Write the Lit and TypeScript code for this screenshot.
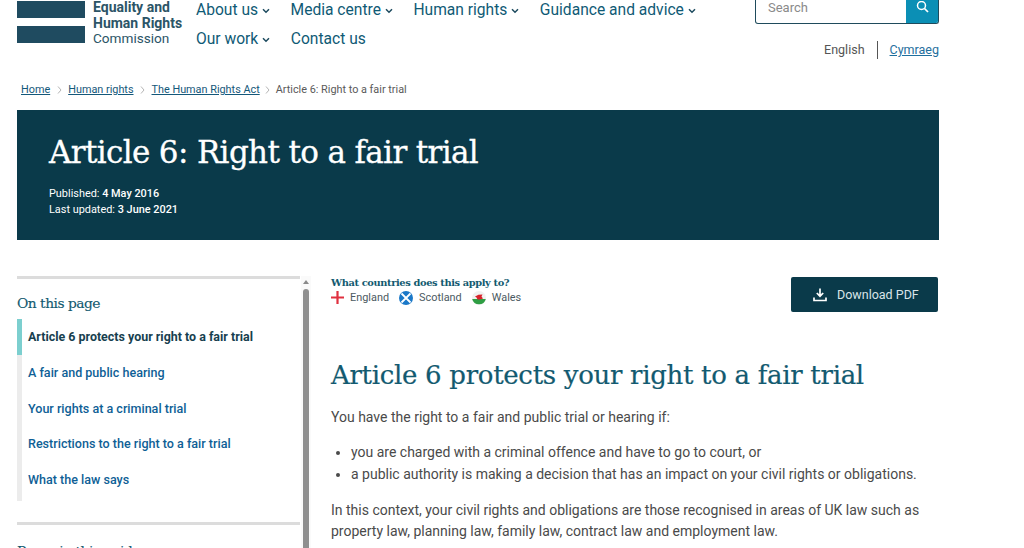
import { LitElement, html, css } from "lit";
import { customElement } from "lit/decorators.js";

const chev = html`<svg class="chev" viewBox="0 0 8 6" width="8" height="6"><path d="M1 1.2 4 4.2 7 1.2" fill="none" stroke="currentColor" stroke-width="1.5"/></svg>`;

@customElement("app-root")
export class AppRoot extends LitElement {
  static styles = css`
    :host { display: block; width: 1024px; height: 548px; overflow: hidden; background: #fff; font-family: Roboto, "Liberation Sans", sans-serif; color: #4a4a4a; }
    a { color: inherit; }
    .page { width: 922px; margin-left: 17px; }
    .header { height: 76px; display: flex; position: relative; }
    .logo { width: 68px; display: flex; flex-direction: column; gap: 8px; padding-top: 1px; flex: none; }
    .logo i { display: block; height: 17px; background: #1f4b60; }
    .logotext { margin-left: 8px; width: 103px; font-size: 13.6px; line-height: 15.5px; color: #2c5567; flex: none; }
    .logotext b { font-size: 14px; font-weight: 700; display: block; }
    .nav { width: 520px; display: flex; flex-wrap: wrap; column-gap: 20.5px; font-size: 15.6px; color: #0f5a75; align-content: flex-start; }
    .nav span { height: 29px; line-height: 21px; white-space: nowrap; display: flex; align-items: flex-start; gap: 4px; }
    .chev { margin-top: 8px; color: #1c4a5e; }
    .right { margin-left: auto; width: 184px; display: flex; flex-direction: column; align-items: flex-end; }
    .search { width: 184px; height: 24px; box-sizing: border-box; border: 1px solid #1f4b5c; border-top: 0; border-radius: 0 0 3px 3px; display: flex; overflow: hidden; }
    .search .ph { flex: 1; padding-left: 12px; font-size: 13px; line-height: 16px; color: #8a8a8a; }
    .search .btn { width: 32px; background: #0b8fb5; display: flex; justify-content: center; padding-top: 1px; box-sizing: border-box; }
    .lang { display: flex; align-items: center; margin-top: 16.5px; font-size: 12.5px; height: 18px; }
    .lang .en { color: #555; padding-right: 12px; border-right: 1px solid #555; line-height: 18px; margin-right: 12px; }
    .lang a { color: #1f6f9e; }
    .crumbs { height: 34px; display: flex; align-items: flex-start; padding: 1px 0 0 4px; box-sizing: border-box; font-size: 10.85px; line-height: 26px; color: #5a5a5a; }
    .crumbs a { color: #14587a; }
    .crumbs .sep { width: 18px; display: flex; justify-content: center; padding-top: 9px; box-sizing: border-box; height: 26px; }
    .crumbs .sep.last { width: 16px; }
    .hero { height: 130px; background: #0a3a4a; color: #fff; padding: 23px 32px 0; box-sizing: border-box; }
    .hero h1 { margin: 0; font: 400 31px/38px "DejaVu Serif", serif; letter-spacing: -0.65px; -webkit-text-stroke: 0.3px #fff; }
    .hero .meta { margin-top: 15px; font-size: 10.9px; line-height: 16px; }
    .hero .meta b { font-weight: 500; }
    .body { display: flex; margin-top: 35px; padding-top: 1px; }
    .side { width: 283px; flex: none; border-top: 3px solid #dcdcdc; box-sizing: border-box; height: 280px; }
    .side h2, .side h3 { font: 400 13.8px/20px "DejaVu Serif", serif; letter-spacing: -0.5px; color: #125a70; -webkit-text-stroke: 0.15px #125a70; }
    .side h2 { margin: 14px 0 0; }
    .toc { margin-top: 6px; border-left: 5px solid #ececec; height: 182px; display: flex; flex-direction: column; }
    .toc a { height: 35.75px; line-height: 35px; padding-left: 6px; font-size: 12.55px; font-weight: 500; color: #0f5f96; text-decoration: none; box-sizing: border-box; }
    .toc a.on { color: #173f4f; font-size: 12.45px; font-weight: 700; border-left: 5px solid #7ccfcf; margin-left: -5px; }
    .rule { height: 3px; background: #dcdcdc; margin-top: 21px; }
    .side h3 { margin: 16px 0 0; }
    .bar { width: 10px; margin-left: 1px; flex: none; background: #fafafa; height: 280px; display: flex; flex-direction: column; align-items: center; }
    .bar .up { margin-top: 4px; width: 0; height: 0; border-left: 3.5px solid transparent; border-right: 3.5px solid transparent; border-bottom: 4px solid #8a8a8a; }
    .bar .thumb { margin-top: 5px; width: 6px; flex: 1; background: #8f8f8f; border-radius: 3px 3px 0 0; }
    .main { flex: 1; margin-left: 20px; min-width: 0; }
    .top { display: flex; justify-content: space-between; align-items: flex-start; height: 81px; }
    .q { font: 700 9.85px/14px "DejaVu Serif", serif; letter-spacing: -0.38px; color: #125a70; }
    .countries { display: flex; align-items: center; font-size: 10.9px; color: #4c5a62; height: 15px; }
    .countries svg { margin-right: 6px; flex: none; }
    .countries span { margin-right: 10px; }
    .dl { width: 147px; height: 35px; margin: 1px 1px 0 0; background: #0a3a4a; border-radius: 2px; color: #d9e4e8; display: flex; align-items: center; padding-left: 22px; gap: 10px; font-size: 12.5px; box-sizing: border-box; }
    .main h2 { margin: 0; font: 400 26px/36px "DejaVu Serif", serif; letter-spacing: -0.3px; color: #125a70; -webkit-text-stroke: 0.2px #125a70; }
    p { margin: 14px 0 0; font-size: 14px; line-height: 21.5px; color: #4a4a4a; }
    ul { margin: 12px 0 0; padding: 0 0 0 20px; font-size: 14px; line-height: 22px; color: #4a4a4a; }
    li::marker { font-size: 13px; }
    p.l { margin-top: 15px; }
  `;

  render() {
    return html`<div class="page">
      <div class="header">
        <div class="logo"><i></i><i></i></div>
        <div class="logotext"><b>Equality and</b><b>Human Rights</b>Commission</div>
        <div class="nav">
          <span>About us ${chev}</span><span>Media centre ${chev}</span><span>Human rights ${chev}</span><span>Guidance and advice ${chev}</span>
          <span>Our work ${chev}</span><span>Contact us</span>
        </div>
        <div class="right">
          <div class="search"><div class="ph">Search</div><div class="btn">
            <svg width="13" height="13" viewBox="0 0 13 13"><circle cx="5.5" cy="4.5" r="4" fill="none" stroke="#fff" stroke-width="1.5"/><path d="M8.5 7.5 12 11" stroke="#fff" stroke-width="1.7"/></svg>
          </div></div>
          <div class="lang"><span class="en">English</span><a href="#">Cymraeg</a></div>
        </div>
      </div>
      <div class="crumbs">
        <a href="#">Home</a><span class="sep">${this.sep()}</span>
        <a href="#">Human rights</a><span class="sep">${this.sep()}</span>
        <a href="#">The Human Rights Act</a><span class="sep last">${this.sep()}</span>
        <span>Article 6: Right to a fair trial</span>
      </div>
      <div class="hero">
        <h1>Article 6: Right to a fair trial</h1>
        <div class="meta">Published: <b>4 May 2016</b><br>Last updated: <b>3 June 2021</b></div>
      </div>
      <div class="body">
        <div class="side">
          <h2>On this page</h2>
          <div class="toc">
            <a class="on" href="#">Article 6 protects your right to a fair trial</a>
            <a href="#">A fair and public hearing</a>
            <a href="#">Your rights at a criminal trial</a>
            <a href="#">Restrictions to the right to a fair trial</a>
            <a href="#">What the law says</a>
          </div>
          <div class="rule"></div>
          <h3>Pages in this guide</h3>
        </div>
        <div class="bar"><div class="up"></div><div class="thumb"></div></div>
        <div class="main">
          <div class="top">
            <div>
              <div class="q">What countries does this apply to?</div>
              <div class="countries">
                <svg width="13" height="13" viewBox="0 0 13 13"><path d="M6.5 0v13M0 6.5h13" stroke="#e0303f" stroke-width="2.2"/></svg><span>England</span>
                <svg width="14" height="14" viewBox="0 0 14 14"><circle cx="7" cy="7" r="7" fill="#1a78c8"/><path d="M2.5 2.5l9 9M11.5 2.5l-9 9" stroke="#fff" stroke-width="1.8"/></svg><span>Scotland</span>
                <svg width="14" height="14" viewBox="0 0 14 14"><circle cx="7" cy="7" r="7" fill="#f1f1f1"/><path d="M0.2 8h13.6A7 7 0 0 1 .2 8Z" fill="#2f9e44"/><path d="M3 5.5 6.5 3.8 10.5 3.5 9.5 5.5 11 7.5 8 8.5 5.5 8.5 4.5 6.5Z" fill="#d8232a"/></svg><span>Wales</span>
              </div>
            </div>
            <div class="dl">
              <svg width="14" height="14" viewBox="0 0 14 14"><path d="M7 0.5v7.5M3.8 5 7 8.2 10.2 5" fill="none" stroke="#fff" stroke-width="1.7"/><path d="M1 9.5v3h12v-3" fill="none" stroke="#fff" stroke-width="1.7"/></svg>
              Download PDF
            </div>
          </div>
          <h2 class="title">Article 6 protects your right to a fair trial</h2>
          <p>You have the right to a fair and public trial or hearing if:</p>
          <ul>
            <li>you are charged with a criminal offence and have to go to court, or</li>
            <li>a public authority is making a decision that has an impact on your civil rights or obligations.</li>
          </ul>
          <p class="l">In this context, your civil rights and obligations are those recognised in areas of UK law such as property law, planning law, family law, contract law and employment law.</p>
        </div>
      </div>
    </div>`;
  }

  sep() {
    return html`<svg width="5" height="8" viewBox="0 0 5 8"><path d="M1 .5 4 4 1 7.5" fill="none" stroke="#b5b5b5" stroke-width="1"/></svg>`;
  }
}
